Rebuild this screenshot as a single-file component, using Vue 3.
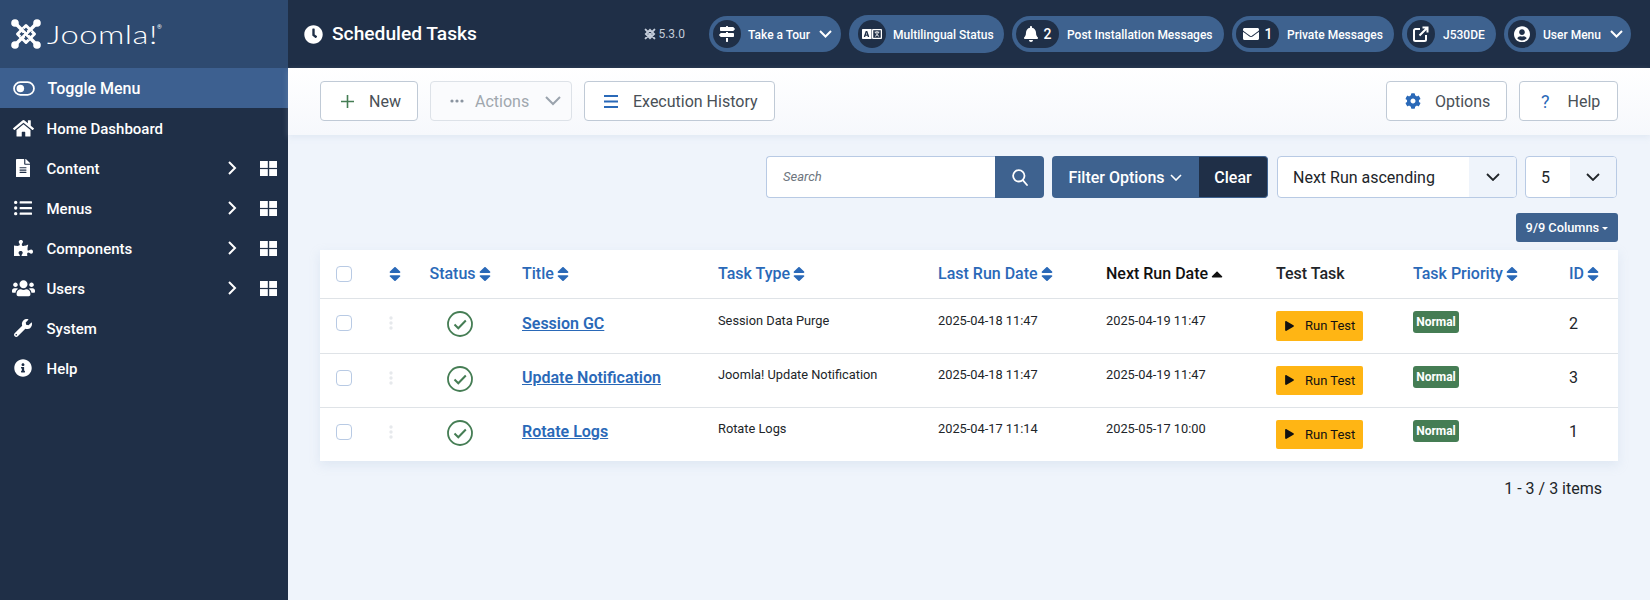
<script setup>
const icons = {
  home: ['0 0 576 512', 'M280.37 148.26L96 300.11V464a16 16 0 0 0 16 16l112.06-.29a16 16 0 0 0 15.92-16V368a16 16 0 0 1 16-16h64a16 16 0 0 1 16 16v95.64a16 16 0 0 0 16 16.05L464 480a16 16 0 0 0 16-16V300L295.67 148.26a12.19 12.19 0 0 0-15.3 0zM571.6 251.47L488 182.56V44.05a12 12 0 0 0-12-12h-56a12 12 0 0 0-12 12v72.61L318.47 43a48 48 0 0 0-61 0L4.34 251.47a12 12 0 0 0-1.6 16.9l25.5 31A12 12 0 0 0 45.15 301l235.22-193.74a12.19 12.19 0 0 1 15.3 0L530.9 301a12 12 0 0 0 16.9-1.6l25.5-31a12 12 0 0 0-1.7-16.93z'],
  file: ['0 0 384 512', 'M224 136V0H24C10.7 0 0 10.7 0 24v464c0 13.3 10.7 24 24 24h336c13.3 0 24-10.7 24-24V160H248c-13.2 0-24-10.8-24-24zm64 236c0 6.6-5.4 12-12 12H108c-6.6 0-12-5.4-12-12v-8c0-6.6 5.4-12 12-12h168c6.6 0 12 5.4 12 12v8zm0-64c0 6.6-5.4 12-12 12H108c-6.6 0-12-5.4-12-12v-8c0-6.6 5.4-12 12-12h168c6.6 0 12 5.4 12 12v8zm0-72v8c0 6.6-5.4 12-12 12H108c-6.6 0-12-5.4-12-12v-8c0-6.6 5.4-12 12-12h168c6.6 0 12 5.4 12 12zm96-114.1v6.1H256V0h6.1c6.4 0 12.5 2.5 17 7l97.9 98c4.5 4.5 7 10.6 7 16.9z'],
  list: ['0 0 512 512', 'M48 48a48 48 0 1 0 48 48 48 48 0 0 0-48-48zm0 160a48 48 0 1 0 48 48 48 48 0 0 0-48-48zm0 160a48 48 0 1 0 48 48 48 48 0 0 0-48-48zm448 16H176a16 16 0 0 0-16 16v32a16 16 0 0 0 16 16h320a16 16 0 0 0 16-16v-32a16 16 0 0 0-16-16zm0-320H176a16 16 0 0 0-16 16v32a16 16 0 0 0 16 16h320a16 16 0 0 0 16-16V80a16 16 0 0 0-16-16zm0 160H176a16 16 0 0 0-16 16v32a16 16 0 0 0 16 16h320a16 16 0 0 0 16-16v-32a16 16 0 0 0-16-16z'],
  puzzle: ['0 0 576 512', 'M519.442 288.651c-41.519 0-59.5 31.593-82.058 31.593C377.409 320.244 432 144 432 144s-196.288 80-196.288-3.297c0-35.827 36.288-46.25 36.288-85.985C272 19.216 243.885 0 210.539 0c-34.654 0-66.366 18.891-66.366 56.346 0 41.364 31.711 59.277 31.711 81.75C175.885 207.719 0 166.758 0 166.758v333.237s178.635 41.047 178.635-28.662c0-22.473-40-40.107-40-81.471 0-37.456 29.25-56.346 63.577-56.346 33.673 0 61.788 19.216 61.788 54.717 0 39.735-36.288 50.158-36.288 85.985 0 60.803 129.675 25.73 181.23 25.73 0 0-34.725-120.101 25.827-120.101 35.962 0 46.423 36.152 86.308 36.152C556.712 416 576 387.99 576 354.443c0-34.199-18.962-65.792-56.558-65.792z'],
  users: ['0 0 640 512', 'M96 224c35.3 0 64-28.7 64-64s-28.7-64-64-64-64 28.7-64 64 28.7 64 64 64zm448 0c35.3 0 64-28.7 64-64s-28.7-64-64-64-64 28.7-64 64 28.7 64 64 64zm32 32h-64c-17.6 0-33.5 7.1-45.1 18.6 40.3 22.1 68.9 62 75.1 109.4h66c17.7 0 32-14.3 32-32v-32c0-35.3-28.7-64-64-64zm-256 0c61.9 0 112-50.1 112-112S381.9 32 320 32 208 82.1 208 144s50.1 112 112 112zm76.8 32h-8.3c-20.8 10-43.9 16-68.5 16s-47.6-6-68.5-16h-8.3C179.6 288 128 339.6 128 403.2V432c0 26.5 21.5 48 48 48h288c26.5 0 48-21.5 48-48v-28.8c0-63.6-51.6-115.2-115.2-115.2zm-223.7-13.4C161.5 263.1 145.6 256 128 256H64c-35.3 0-64 28.7-64 64v32c0 17.7 14.3 32 32 32h65.9c6.3-47.4 34.9-87.3 75.2-109.4z'],
  wrench: ['0 0 512 512', 'M507.73 109.1c-2.24-9.03-13.54-12.09-20.12-5.51l-74.36 74.36-67.88-11.31-11.31-67.88 74.36-74.36c6.62-6.62 3.43-17.9-5.66-20.16-47.38-11.74-99.55.91-136.58 37.93-39.64 39.64-50.55 97.1-34.05 147.2L18.74 402.76c-24.99 24.99-24.99 65.51 0 90.5 24.99 24.99 65.51 24.99 90.5 0l213.21-213.21c50.12 16.71 107.47 5.68 147.37-34.22 37.07-37.07 49.7-89.32 37.91-136.73zM64 472c-13.25 0-24-10.75-24-24 0-13.26 10.75-24 24-24s24 10.74 24 24c0 13.25-10.75 24-24 24z'],
  info: ['0 0 512 512', 'M256 8C119.043 8 8 119.083 8 256c0 136.997 111.043 248 248 248s248-111.003 248-248C504 119.083 392.957 8 256 8zm0 110c23.196 0 42 18.804 42 42s-18.804 42-42 42-42-18.804-42-42 18.804-42 42-42zm56 254c0 6.627-5.373 12-12 12h-88c-6.627 0-12-5.373-12-12v-24c0-6.627 5.373-12 12-12h12v-64h-12c-6.627 0-12-5.373-12-12v-24c0-6.627 5.373-12 12-12h64c6.627 0 12 5.373 12 12v100h12c6.627 0 12 5.373 12 12v24z'],
  clock: ['0 0 512 512', 'M256,8C119,8,8,119,8,256S119,504,256,504,504,393,504,256,393,8,256,8Zm92.49,313h0l-20,25a16,16,0,0,1-22.49,2.5h0l-67-49.72a40,40,0,0,1-15-31.23V112a16,16,0,0,1,16-16h32a16,16,0,0,1,16,16V256l58,42.5A16,16,0,0,1,348.49,321Z'],
  cog: ['0 0 512 512', 'M487.4 315.7l-42.6-24.6c4.3-23.2 4.3-47 0-70.2l42.6-24.6c4.9-2.8 7.1-8.6 5.5-14-11.1-35.6-30-67.8-54.7-94.6-3.8-4.1-10-5.1-14.8-2.3L380.8 110c-17.9-15.4-38.5-27.3-60.8-35.1V25.8c0-5.6-3.9-10.5-9.4-11.7-36.7-8.2-74.3-7.8-109.2 0-5.5 1.2-9.4 6.1-9.4 11.7V75c-22.2 7.9-42.8 19.8-60.8 35.1L88.7 85.5c-4.9-2.8-11-1.9-14.8 2.3-24.7 26.7-43.6 58.9-54.7 94.6-1.7 5.4.6 11.2 5.5 14L67.3 221c-4.3 23.2-4.3 47 0 70.2l-42.6 24.6c-4.9 2.8-7.1 8.6-5.5 14 11.1 35.6 30 67.8 54.7 94.6 3.8 4.1 10 5.1 14.8 2.3l42.6-24.6c17.9 15.4 38.5 27.3 60.8 35.1v49.2c0 5.6 3.9 10.5 9.4 11.7 36.7 8.2 74.3 7.8 109.2 0 5.5-1.2 9.4-6.1 9.4-11.7v-49.2c22.2-7.9 42.8-19.8 60.8-35.1l42.6 24.6c4.9 2.8 11 1.9 14.8-2.3 24.7-26.7 43.6-58.9 54.7-94.6 1.5-5.5-.7-11.3-5.6-14.1zM256 336c-44.1 0-80-35.9-80-80s35.9-80 80-80 80 35.9 80 80-35.9 80-80 80z'],
  bell: ['0 0 448 512', 'M224 512c35.32 0 63.97-28.65 63.97-64H160.03c0 35.35 28.65 64 63.97 64zm215.39-149.71c-19.32-20.76-55.47-51.99-55.47-154.29 0-77.7-54.48-139.9-127.94-155.16V32c0-17.67-14.32-32-31.98-32s-31.98 14.33-31.98 32v20.84C118.56 68.1 64.08 130.3 64.08 208c0 102.3-36.15 133.53-55.47 154.29-6 6.45-8.66 14.16-8.61 21.71.11 16.4 12.98 32 32.1 32h383.8c19.12 0 32-15.6 32.1-32 .05-7.55-2.61-15.27-8.61-21.71z'],
  mail: ['0 0 512 512', 'M502.3 190.8c3.9-3.1 9.7-.2 9.7 4.7V400c0 26.5-21.5 48-48 48H48c-26.5 0-48-21.5-48-48V195.6c0-5 5.7-7.8 9.7-4.7 22.4 17.4 52.1 39.5 154.1 113.6 21.1 15.4 56.7 47.8 92.2 47.6 35.7.3 72-32.8 92.3-47.6 102-74.1 131.6-96.3 154-113.7zM256 320c23.2.4 56.6-29.2 73.4-41.4 132.7-96.3 142.8-104.7 173.4-128.7 5.8-4.5 9.2-11.5 9.2-18.9v-19c0-26.5-21.5-48-48-48H48C21.5 64 0 85.5 0 112v19c0 7.4 3.4 14.3 9.2 18.9 30.6 23.9 40.7 32.4 173.4 128.7 16.8 12.2 50.2 41.8 73.4 41.4z'],
  user: ['0 0 496 512', 'M248 8C111 8 0 119 0 256s111 248 248 248 248-111 248-248S385 8 248 8zm0 96c48.6 0 88 39.4 88 88s-39.4 88-88 88-88-39.4-88-88 39.4-88 88-88zm0 344c-58.7 0-111.3-26.6-146.5-68.2 18.8-35.4 55.6-59.8 98.5-59.8 2.4 0 4.8.4 7.1 1.1 13 4.2 26.6 6.9 40.9 6.9 14.3 0 28-2.7 40.9-6.9 2.3-.7 4.7-1.1 7.1-1.1 42.9 0 79.7 24.4 98.5 59.8C359.3 421.4 306.7 448 248 448z'],
  signs: ['0 0 512 512', 'M507.31 84.69L464 41.37c-6-6-14.14-9.37-22.63-9.37H288V16c0-8.84-7.16-16-16-16h-32c-8.84 0-16 7.16-16 16v16H56c-13.25 0-24 10.75-24 24v80c0 13.25 10.75 24 24 24h385.37c8.49 0 16.62-3.37 22.63-9.37l43.31-43.31c6.25-6.26 6.25-16.38 0-22.63zM224 496c0 8.84 7.16 16 16 16h32c8.84 0 16-7.16 16-16V384h-64v112zm232-272H288v-32h-64v32H70.63c-8.49 0-16.62 3.37-22.63 9.37L4.69 276.69c-6.25 6.25-6.25 16.38 0 22.63L48 342.63c6 6 14.14 9.37 22.63 9.37H456c13.25 0 24-10.75 24-24v-80c0-13.25-10.75-24-24-24z'],
  lang: ['0 0 640 512', 'M152.1 236.2c-3.5-12.1-7.8-33.2-7.8-33.2h-.5s-4.3 21.1-7.8 33.2l-11.1 37.5H163zM0 120v272c0 13.3 10.7 24 24 24h280V96H24c-13.3 0-24 10.7-24 24zm58.9 216.1L116.4 167c1.7-4.9 6.2-8.1 11.4-8.1h32.5c5.1 0 9.7 3.3 11.4 8.1l57.5 169.1c2.6 7.8-3.1 15.9-11.4 15.9h-22.9a12 12 0 0 1-11.5-8.6l-9.4-31.9h-60.2l-9.1 31.8c-1.5 5.1-6.2 8.7-11.5 8.7H70.3c-8.2 0-14-8.1-11.4-15.9z'],
  sort: ['0 0 320 512', 'M41 288h238c21.4 0 32.1 25.9 17 41L177 448c-9.4 9.4-24.6 9.4-33.9 0L24 329c-15.1-15.1-4.4-41 17-41zm255-105L177 64c-9.4-9.4-24.6-9.4-33.9 0L24 183c-15.1 15.1-4.4 41 17 41h238c21.4 0 32.1-25.9 17-41z'],
  up: ['0 0 320 512', 'M288.662 352H31.338c-17.818 0-26.741-21.543-13.881-34.286l128.662-128.662c8.21-8.21 21.559-8.21 29.769 0l128.662 128.662c12.86 12.743 3.937 34.286-13.888 34.286z'],
  play: ['0 0 448 512', 'M424.4 214.7L72.4 6.6C43.8-10.3 0 6.1 0 47.9V464c0 37.5 40.7 60.1 72.4 41.3l352-208c31.4-18.5 31.5-64.1 0-82.6z']
}

const menu = [
  { label: 'Home Dashboard', icon: 'home', w: 21 },
  { label: 'Content', icon: 'file', w: 14, more: true },
  { label: 'Menus', icon: 'list', w: 18, more: true },
  { label: 'Components', icon: 'puzzle', w: 19, more: true },
  { label: 'Users', icon: 'users', w: 23, more: true },
  { label: 'System', icon: 'wrench', w: 18 },
  { label: 'Help', icon: 'info', w: 18 }
]

const heads = [
  { label: '', sort: true },
  { label: 'Status', sort: true, center: true },
  { label: 'Title', sort: true },
  { label: 'Task Type', sort: true },
  { label: 'Last Run Date', sort: true },
  { label: 'Next Run Date', active: true },
  { label: 'Test Task', plain: true },
  { label: 'Task Priority', sort: true },
  { label: 'ID', sort: true }
]

const rows = [
  { title: 'Session GC', type: 'Session Data Purge', last: '2025-04-18 11:47', next: '2025-04-19 11:47', id: 2 },
  { title: 'Update Notification', type: 'Joomla! Update Notification', last: '2025-04-18 11:47', next: '2025-04-19 11:47', id: 3 },
  { title: 'Rotate Logs', type: 'Rotate Logs', last: '2025-04-17 11:14', next: '2025-05-17 10:00', id: 1 }
]
</script>

<template>
  <div class="app">
    <aside class="sidebar">
      <div class="logo">
        <svg class="logo-mark" viewBox="0 0 30 30" fill="none" stroke-linecap="round" stroke-linejoin="round">
          <path d="M4 4L26 26M26 4L4 26" stroke="#fff" stroke-width="3.400" />
          <path d="M15 6.500L23.500 15L15 23.500L6.500 15Z" stroke="#fff" stroke-width="3" />
          <path d="M12.500 9.800L16 13M20.200 12.500L17 16M17.500 20.200L14 17M9.800 17.500L13 14" stroke="#2e4a70" stroke-width="1" stroke-linecap="butt" />
          <g fill="#fff">
            <circle cx="4" cy="4" r="3.800" /><circle cx="26" cy="4" r="3.800" />
            <circle cx="4" cy="26" r="3.800" /><circle cx="26" cy="26" r="3.800" />
          </g>
        </svg>
        <span class="logo-text">Joomla!</span><span class="logo-reg">®</span>
      </div>
      <nav>
        <div class="item toggle">
          <span class="ico">
            <svg width="22" height="15" viewBox="0 0 21 14">
              <rect x="1" y="1" width="19" height="12" rx="6" fill="none" stroke="#fff" stroke-width="1.7" />
              <circle cx="7" cy="7" r="3.6" fill="#fff" />
            </svg>
          </span>
          <span>Toggle Menu</span>
        </div>
        <div v-for="m in menu" :key="m.label" class="item">
          <span class="ico">
            <svg :width="m.w" :viewBox="icons[m.icon][0]" fill="#fff"><path :d="icons[m.icon][1]" /></svg>
          </span>
          <span class="item-label">{{ m.label }}</span>
          <template v-if="m.more">
            <svg class="item-chev" width="9" height="14" viewBox="0 0 9 14" fill="none" stroke="#fff" stroke-width="2"><path d="M1 1l6 6-6 6" /></svg>
            <svg class="item-grid" width="17" height="15" viewBox="0 0 17 15" fill="#fff">
              <rect width="7.8" height="6.9" /><rect x="9.2" width="7.8" height="6.9" />
              <rect y="8.1" width="7.8" height="6.9" /><rect x="9.2" y="8.1" width="7.8" height="6.9" />
            </svg>
          </template>
        </div>
      </nav>
    </aside>

    <main class="main">
      <header class="header">
        <svg class="title-ico" width="19" :viewBox="icons.clock[0]" fill="#fff"><path :d="icons.clock[1]" /></svg>
        <h1 class="title">Scheduled Tasks</h1>
        <div class="version">
          <svg width="12" height="12" viewBox="0 0 30 30" fill="none" stroke="#c3ccd9" stroke-width="5" stroke-linecap="round">
            <path d="M4 4L26 26M26 4L4 26M15 5L25 15L15 25L5 15Z" />
          </svg>
          <span>5.3.0</span>
        </div>
        <div class="pills">
          <div class="pill tail tour">
            <span class="disc"><svg width="16" :viewBox="icons.signs[0]" fill="#fff"><path :d="icons.signs[1]" /></svg></span>
            <span class="pill-text">Take a Tour</span>
            <svg class="pill-chev" width="13" height="8" viewBox="0 0 13 8" fill="none" stroke="#fff" stroke-width="2"><path d="M1 1l5.5 5.5L12 1" /></svg>
          </div>
          <div class="pill lang">
            <span class="disc">
              <svg width="20" viewBox="0 0 640 512">
                <path :d="icons.lang[1]" fill="#fff" />
                <rect x="340" y="116" width="280" height="280" rx="10" fill="none" stroke="#fff" stroke-width="40" />
                <path d="M405 196H555M480 160V196M525 196C510 260 460 310 420 330M435 200C455 260 500 310 545 330" fill="none" stroke="#fff" stroke-width="28" />
              </svg>
            </span>
            <span class="pill-text">Multilingual Status</span>
          </div>
          <div class="pill post">
            <span class="disc wide"><svg width="14" :viewBox="icons.bell[0]" fill="#fff"><path :d="icons.bell[1]" /></svg><b>2</b></span>
            <span class="pill-text">Post Installation Messages</span>
          </div>
          <div class="pill priv">
            <span class="disc wide"><svg width="16" :viewBox="icons.mail[0]" fill="#fff"><path :d="icons.mail[1]" /></svg><b>1</b></span>
            <span class="pill-text">Private Messages</span>
          </div>
          <div class="pill site">
            <span class="disc">
              <svg width="16" height="16" viewBox="0 0 16 16" fill="none" stroke="#fff" stroke-width="2">
                <path d="M7 3H2.5A1.5 1.5 0 0 0 1 4.500V13.500A1.500 1.500 0 0 0 2.500 15H11.500A1.500 1.500 0 0 0 13 13.500V9" />
                <path d="M6.500 9.500L14 2M9.500 1.500H14.500V6.500" />
              </svg>
            </span>
            <span class="pill-text">J530DE</span>
          </div>
          <div class="pill tail umenu">
            <span class="disc"><svg width="16" :viewBox="icons.user[0]" fill="#fff"><path :d="icons.user[1]" /></svg></span>
            <span class="pill-text">User Menu</span>
            <svg class="pill-chev" width="13" height="8" viewBox="0 0 13 8" fill="none" stroke="#fff" stroke-width="2"><path d="M1 1l5.500 5.500L12 1" /></svg>
          </div>
        </div>
      </header>

      <section class="toolbar">
        <button class="btn new">
          <svg width="13" height="13" viewBox="0 0 13 13" stroke="#457d54" stroke-width="1.600"><path d="M6.500 0V13M0 6.500H13" /></svg>
          <span>New</span>
        </button>
        <button class="btn actions">
          <svg width="14" height="4" viewBox="0 0 14 4" fill="#8a94a0"><circle cx="2" cy="2" r="1.600" /><circle cx="7" cy="2" r="1.600" /><circle cx="12" cy="2" r="1.600" /></svg>
          <span>Actions</span>
          <svg class="actions-chev" width="16" height="10" viewBox="0 0 16 10" fill="none" stroke="#9aa3ad" stroke-width="2"><path d="M1 1l7 7 7-7" /></svg>
        </button>
        <button class="btn history">
          <svg width="14" height="13" viewBox="0 0 14 13" fill="#2a69b8"><rect width="14" height="2" /><rect y="5.500" width="14" height="2" /><rect y="11" width="14" height="2" /></svg>
          <span>Execution History</span>
        </button>
        <span class="spacer"></span>
        <button class="btn options">
          <svg width="16" :viewBox="icons.cog[0]" fill="#2a69b8"><path :d="icons.cog[1]" /></svg>
          <span>Options</span>
        </button>
        <button class="btn help">
          <span class="q">?</span>
          <span>Help</span>
        </button>
      </section>

      <section class="content">
        <div class="filters">
          <div class="search">
            <span class="search-input">Search</span>
            <span class="search-btn">
              <svg width="16" height="17" viewBox="0 0 16 17" fill="none" stroke="#fff" stroke-width="1.800"><circle cx="6.800" cy="6.800" r="5.700" /><path d="M10.800 11.200L15 16" stroke-linecap="round" /></svg>
            </span>
          </div>
          <div class="filter-group">
            <span class="filter-opts">Filter Options
              <svg width="12" height="7" viewBox="0 0 12 7" fill="none" stroke="#fff" stroke-width="1.600"><path d="M1 1l5 5 5-5" /></svg>
            </span>
            <span class="clear">Clear</span>
          </div>
          <div class="select order">
            <span class="select-val">Next Run ascending</span>
            <span class="select-arrow"><svg width="14" height="8" viewBox="0 0 14 8" fill="none" stroke="#212529" stroke-width="1.800"><path d="M1 1l6 6 6-6" /></svg></span>
          </div>
          <div class="select limit">
            <span class="select-val">5</span>
            <span class="select-arrow"><svg width="14" height="8" viewBox="0 0 14 8" fill="none" stroke="#212529" stroke-width="1.800"><path d="M1 1l6 6 6-6" /></svg></span>
          </div>
        </div>

        <div class="cols-row">
          <button class="cols">9/9 Columns <i class="caret"></i></button>
        </div>

        <table class="table">
          <colgroup>
            <col class="c52" /><col class="c42" /><col class="c92" /><col class="c196" />
            <col class="c220" /><col class="c168" /><col class="c170" /><col class="c137" />
            <col class="c156" /><col class="c65" />
          </colgroup>
          <thead>
            <tr>
              <th><input class="check" type="checkbox" /></th>
              <th v-for="(h, i) in heads" :key="i" :class="{ center: i < 2, act: h.active, plain: h.plain }">
                <span>{{ h.label }}</span>
                <svg v-if="h.sort" class="sort" width="12" height="18" :viewBox="icons.sort[0]" preserveAspectRatio="none" fill="#2a69b8"><path :d="icons.sort[1]" /></svg>
                <svg v-if="h.active" class="sort" width="12" height="18" :viewBox="icons.up[0]" fill="#111"><path :d="icons.up[1]" /></svg>
              </th>
            </tr>
          </thead>
          <tbody>
            <tr v-for="r in rows" :key="r.id">
              <td><input class="check row-check" type="checkbox" /></td>
              <td>
                <svg class="grip" width="4" height="14" viewBox="0 0 4 14" fill="#e6e9ec"><circle cx="2" cy="2" r="1.700" /><circle cx="2" cy="7" r="1.700" /><circle cx="2" cy="12" r="1.700" /></svg>
              </td>
              <td class="center">
                <svg class="status" width="26" height="26" viewBox="0 0 26 26" fill="none" stroke="#457d54">
                  <circle cx="13" cy="13" r="12" stroke-width="1.800" />
                  <path d="M7.500 13.500l3.800 3.800 7.500-7.800" stroke-width="2" />
                </svg>
              </td>
              <td><a class="link">{{ r.title }}</a></td>
              <td class="small">{{ r.type }}</td>
              <td class="small">{{ r.last }}</td>
              <td class="small">{{ r.next }}</td>
              <td>
                <button class="run">
                  <svg width="9" height="10" :viewBox="icons.play[0]" fill="#111"><path :d="icons.play[1]" /></svg>
                  <span>Run Test</span>
                </button>
              </td>
              <td><span class="badge">Normal</span></td>
              <td class="id">{{ r.id }}</td>
            </tr>
          </tbody>
        </table>

        <div class="count">1 - 3 / 3 items</div>
      </section>
    </main>
  </div>
</template>

<style>
html, body { margin: 0; background: #eff4fb; }
</style>

<style scoped>
* { box-sizing: border-box; }
.app { display: flex; width: 1650px; height: 600px; overflow: hidden; background: #eff4fb; font-family: Roboto, "Liberation Sans", sans-serif; color: #212529; }
.sidebar { width: 288px; flex: none; background: #1f2f47; color: #fff; }
.logo { height: 68px; background: #2e4a70; display: flex; align-items: center; padding-left: 11px; }
.logo-mark { width: 30px; height: 30px; flex: none; }
.logo-text { font-family: Lato, sans-serif; font-weight: 300; font-size: 26px; margin-left: 6px; letter-spacing: 0.4px; display: inline-block; width: 110px; transform: scaleX(1.26); transform-origin: left center; white-space: nowrap; }
.logo-reg { font-size: 6px; align-self: flex-start; margin-top: 23px; }
.item { height: 40px; display: flex; align-items: center; font-size: 15px; font-weight: 500; }
.ico { width: 46.5px; display: flex; align-items: center; justify-content: center; flex: none; }
.ico svg { display: block; }
.toggle { background: #3d6090; font-size: 16px; }
.toggle .ico { width: 47.5px; }
.item-label { flex: 1; padding-top: 1px; }
.item-chev { margin-right: 23px; }
.item-grid { margin-right: 11px; }

.main { flex: 1; min-width: 0; display: flex; flex-direction: column; }
.header { height: 68px; flex: none; background: #1f2f47; color: #fff; display: flex; align-items: center; padding: 0 19px 0 16px; }
.title-ico { flex: none; }
.title { margin: 0 0 0 9px; font-size: 19.2px; font-weight: 500; line-height: 1; }
.version { margin-left: auto; display: flex; align-items: center; gap: 2px; font-size: 12px; color: #c3ccd9; margin-right: 24px; }
.pills { display: flex; align-items: center; gap: 8px; }
.pill { height: 36px; display: flex; align-items: center; gap: 8px; background: #3e628f; border-radius: 19px; padding-left: 4px; font-size: 12px; font-weight: 500; white-space: nowrap; }
.pill-text { padding-top: 1px; }
.pill.tail .pill-text { margin-left: -1px; }
.pill-chev { margin-left: 1px; }
.pill.tour { width: 132px; }
.pill.lang { width: 155px; height: 38px; padding-left: 9px; gap: 7px; }
.pill.post { width: 212px; }
.pill.priv { width: 162px; }
.pill.site { width: 94px; padding-left: 5px; }
.pill.umenu { width: 127px; }
.disc { width: 28px; height: 28px; border-radius: 14px; background: #1f2f47; display: flex; align-items: center; justify-content: center; flex: none; }
.disc svg { display: block; }
.disc.wide { width: 43px; gap: 6px; }
.disc b { font-size: 14px; font-weight: 500; }

.toolbar { height: 67px; flex: none; display: flex; align-items: center; gap: 12px; padding: 0 32px 1px; background: linear-gradient(#fff, #f6f8fc); box-shadow: 0 2px 6px rgba(180, 195, 220, 0.25); position: relative; }
.spacer { flex: 1; }
.btn { height: 40px; display: flex; align-items: center; background: #fff; border: 1px solid #c0cad6; border-radius: 4px; font-family: inherit; font-size: 16px; color: #495057; padding: 0; }
.btn.new { width: 98px; padding-left: 20px; gap: 15px; }
.btn.actions { width: 142px; padding-left: 19px; color: #a0a7ae; background: #fafbfd; border-color: #dde2e8; }
.btn.actions span { margin-left: 11px; }
.actions-chev { margin-left: 16px; }
.btn.history { width: 191px; padding-left: 19px; gap: 15px; }
.btn.options { width: 121px; padding-left: 18px; gap: 14px; }
.btn.help { width: 99px; padding-left: 21px; gap: 18px; }
.q { color: #2a69b8; font-size: 18px; }

.content { flex: 1; padding: 21px 32px 0; }
.filters { display: flex; justify-content: flex-end; gap: 8px; height: 42px; padding-right: 1px; }
.search { display: flex; width: 278px; }
.search-input { flex: 1; background: #fff; border: 1px solid #b8cae4; border-right: 0; border-radius: 4px 0 0 4px; font-size: 13px; font-style: italic; color: #6d757e; padding: 0 0 2px 16px; display: flex; align-items: center; }
.search-btn { width: 49px; background: #3e628f; border-radius: 0 4px 4px 0; display: flex; align-items: center; justify-content: center; }
.filter-group { display: flex; width: 216px; margin-right: 1px; color: #fff; font-size: 16px; font-weight: 500; }
.filter-opts { width: 147px; background: #3e628f; border-radius: 4px 0 0 4px; display: flex; align-items: center; justify-content: center; gap: 5px; padding-right: 1px; }
.clear { flex: 1; background: #1f2f47; border: 1px solid #3e628f; border-left: 0; border-radius: 0 4px 4px 0; display: flex; align-items: center; justify-content: center; }
.select { display: flex; border: 1px solid #b8cae4; border-radius: 4px; background: #fff; font-size: 16px; overflow: hidden; }
.select-val { flex: 1; display: flex; align-items: center; }
.select-arrow { display: flex; align-items: center; justify-content: center; background: #eff4fb; }
.order { width: 240px; }
.order .select-val { padding-left: 15px; }
.order .select-arrow { width: 47px; }
.limit { width: 92px; }
.limit .select-val { padding-left: 15px; }
.limit .select-arrow { width: 46px; }

.cols-row { display: flex; justify-content: flex-end; margin-top: 15px; }
.cols { width: 102px; height: 29px; background: #3e628f; color: #fff; border: 0; border-radius: 3px; font-family: inherit; font-size: 12.8px; font-weight: 500; padding: 0; white-space: nowrap; }
.caret { display: inline-block; border-top: 3px solid #fff; border-left: 3px solid transparent; border-right: 3px solid transparent; vertical-align: 2px; margin-left: 0; }

.table { margin-top: 8px; width: 1298px; table-layout: fixed; border-collapse: collapse; background: #fff; box-shadow: 0 4px 10px rgba(170, 190, 220, 0.25); }
.c52 { width: 52px; } .c42 { width: 42px; } .c92 { width: 92px; } .c196 { width: 196px; } .c220 { width: 220px; }
.c168 { width: 168px; } .c170 { width: 170px; } .c137 { width: 137px; } .c156 { width: 156px; } .c65 { width: 65px; }
.table th { height: 48px; padding: 0 16px; text-align: left; font-size: 16px; font-weight: 500; color: #2a69b8; border-bottom: 1px solid #dfe3e7; white-space: nowrap; vertical-align: middle; }
.table th.center, .table td.center { text-align: center; padding-left: 0; padding-right: 0; }
.table th.act { color: #111; }
.table th.plain { color: #212529; }
.table td { padding: 12px 16px; vertical-align: top; font-size: 16px; line-height: 24px; border-bottom: 1px solid #dfe3e7; white-space: nowrap; }
.table tr:last-child td { border-bottom: 0; }
.table td.small { font-size: 12.8px; line-height: 20px; }
.table tr + tr td.small { padding-top: 11px; }
.sort { display: inline-block; vertical-align: -4px; margin-left: 3px; }
th span:empty { display: none; }
.check { appearance: none; display: block; width: 16px; height: 16px; margin: 0; background: #fff; border: 1px solid #b8cae4; border-radius: 4px; }
.row-check { margin-top: 4px; }
.grip { display: block; margin: 5px 0 0 1px; }
.status { display: block; margin: 0 auto; }
.link { display: block; margin-top: 1px; color: #2a69b8; font-weight: 600; text-decoration: underline; }
.table tr + tr .link { margin-top: 0; }
.id { padding-top: 13px !important; }
.table tr + tr .id { padding-top: 12px !important; }
.run { height: 29px; width: 87px; display: flex; align-items: center; gap: 11px; padding: 0 0 0 9px; background: #ffb514; border: 0; border-radius: 2px; font-family: inherit; font-size: 13px; color: #111; }
tbody tr:first-child .run { height: 30px; }
.badge { display: block; width: 46px; height: 22px; background: #457d54; color: #fff; border-radius: 3px; font-size: 12px; font-weight: 700; line-height: 22px; text-align: center; }
.count { margin-top: 18px; text-align: right; padding-right: 16px; font-size: 16px; line-height: 20px; }
</style>
